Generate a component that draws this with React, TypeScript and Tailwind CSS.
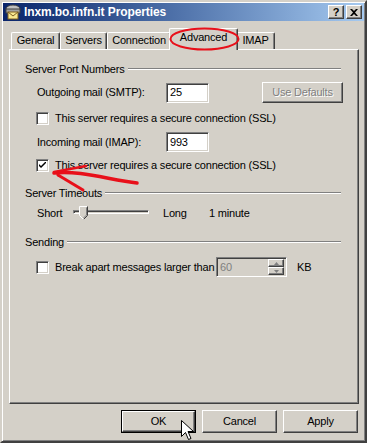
import type { ReactNode } from 'react'

const raised =
  'border border-t-white border-l-white border-r-[#404040] border-b-[#404040] shadow-[inset_-1px_-1px_0_#808080]'
const sunken =
  'border border-t-[#808080] border-l-[#808080] border-r-white border-b-white shadow-[inset_1px_1px_0_#404040,inset_-1px_-1px_0_#d4d0c8]'

function GroupHeader({ title }: { title: string }) {
  return (
    <div className="flex items-center h-[14px]">
      <span>{title}</span>
      <div className="flex-1 ml-[3px] h-[2px] border-t border-t-[#808080] border-b border-b-white" />
    </div>
  )
}

function CheckBox({ checked = false }: { checked?: boolean }) {
  return (
    <div className={`w-[13px] h-[13px] bg-white flex items-center justify-center ${sunken}`}>
      {checked && (
        <svg width="7" height="7" viewBox="0 0 7 7">
          <path d="M0 2 L0 4 L2 6 L7 1 L7 -1 L2 4 Z" fill="#000" />
        </svg>
      )}
    </div>
  )
}

function Button({ children, isDefault = false }: { children: ReactNode; isDefault?: boolean }) {
  if (isDefault) {
    return (
      <div className="w-[75px] h-[23px] border border-black">
        <div className={`w-full h-full flex items-center justify-center ${raised}`}>{children}</div>
      </div>
    )
  }
  return (
    <div className={`w-[75px] h-[23px] flex items-center justify-center ${raised}`}>{children}</div>
  )
}

function Tab({ label, width, selected = false }: { label: string; width: number; selected?: boolean }) {
  const base = 'flex items-start justify-center rounded-t-[2px] border-t border-l border-t-white border-l-white border-r border-r-[#404040] shadow-[inset_-1px_0_0_#808080] bg-[#d4d0c8]'
  if (selected) {
    return (
      <div
        className={`${base} relative z-10 h-[22px] mb-[-1px] -mx-[2px] pt-[2px]`}
        style={{ width: width + 4 }}
      >
        {label}
      </div>
    )
  }
  return (
    <div className={`${base} h-[17px] pt-[1px]`} style={{ width }}>
      {label}
    </div>
  )
}

export default function App() {
  return (
    <div
      className="relative w-[367px] h-[443px] bg-[#d4d0c8] text-[11px] leading-[13px] tracking-[-0.2px] text-black border-2 border-t-[#d4d0c8] border-l-[#d4d0c8] border-r-[#404040] border-b-[#404040] shadow-[inset_1px_1px_0_#fff,inset_-1px_-1px_0_#808080] p-[1px] flex flex-col"
      style={{ fontFamily: '"Liberation Sans", Arial, sans-serif' }}
    >
      {/* title bar */}
      <div className="h-[18px] flex items-center bg-gradient-to-r from-[#0a246a] to-[#a6caf0] pl-[2px] pr-[2px]">
        <svg width="16" height="16" viewBox="0 0 16 16">
          <ellipse cx="8" cy="5" rx="7" ry="4" fill="#c0c0c0" stroke="#404040" />
          <rect x="1" y="5" width="14" height="4" fill="#a0a0a0" stroke="#404040" />
          <rect x="3" y="8" width="10" height="7" fill="#f8e890" stroke="#806020" />
          <path d="M3 8 L8 12 L13 8" fill="none" stroke="#806020" />
        </svg>
        <span className="ml-[3px] text-white font-bold text-[12px] tracking-[-0.1px]">lnxm.bo.infn.it Properties</span>
        <div className={`ml-auto w-[16px] h-[14px] bg-[#d4d0c8] flex items-center justify-center font-bold text-[11px] ${raised}`}>?</div>
        <div className={`ml-[2px] w-[16px] h-[14px] bg-[#d4d0c8] flex items-center justify-center ${raised}`}>
          <svg width="8" height="7" viewBox="0 0 8 7">
            <path d="M0 0 L2 0 L4 2 L6 0 L8 0 L5 3.5 L8 7 L6 7 L4 5 L2 7 L0 7 L3 3.5 Z" fill="#000" />
          </svg>
        </div>
      </div>

      {/* tabs */}
      <div className="mt-[7px] ml-[8px] h-[21px] flex items-end">
        <Tab label="General" width={49} />
        <Tab label="Servers" width={47} />
        <Tab label="Connection" width={64} />
        <Tab label="Advanced" width={65} selected />
        <Tab label="IMAP" width={39} />
      </div>

      {/* panel */}
      <div className="ml-[6px] w-[350px] h-[355px] border border-t-white border-l-white border-r-[#404040] border-b-[#404040] shadow-[inset_-1px_-1px_0_#808080] pl-[15px] pr-[17px] flex flex-col">
        <div className="mt-[12px]">
          <GroupHeader title="Server Port Numbers" />
        </div>
        <div className="mt-[6px] h-[21px] flex items-center pl-[12px]">
          <span className="w-[129px]">Outgoing mail (SMTP):</span>
          <div className={`w-[43px] h-[20px] bg-white pl-[3px] flex items-center ${sunken}`}>25</div>
          <div className={`ml-auto -mr-[2px] w-[81px] h-[21px] flex items-center justify-center text-[#808080] [text-shadow:1px_1px_0_#fff] ${raised}`}>
            Use Defaults
          </div>
        </div>
        <div className="mt-[8px] h-[14px] flex items-center pl-[11px]">
          <CheckBox />
          <span className="ml-[6px]">This server requires a secure connection (SSL)</span>
        </div>
        <div className="mt-[7px] h-[20px] flex items-center pl-[12px]">
          <span className="w-[129px]">Incoming mail (IMAP):</span>
          <div className={`w-[43px] h-[20px] bg-white pl-[3px] flex items-center ${sunken}`}>993</div>
        </div>
        <div className="mt-[6px] h-[14px] flex items-center pl-[11px]">
          <CheckBox checked />
          <span className="ml-[6px]">This server requires a secure connection (SSL)</span>
        </div>

        <div className="mt-[14px]">
          <GroupHeader title="Server Timeouts" />
        </div>
        <div className="mt-[5px] h-[16px] flex items-center pl-[12px]">
          <span className="w-[36px]">Short</span>
          <div className="relative w-[80px] h-[16px]">
            <div className="absolute left-0 top-[5px] w-[76px] h-[4px] border-t border-l border-t-[#808080] border-l-[#808080] border-b border-r border-b-white border-r-white shadow-[inset_1px_1px_0_#404040]" />
            <svg className="absolute left-[6px] top-[1px]" width="9" height="14" viewBox="0 0 9 14">
              <path d="M0.5 0.5 H8.5 V9.5 L4.5 13.5 L0.5 9.5 Z" fill="#d4d0c8" />
              <path d="M0.5 9.5 V0.5 H8" fill="none" stroke="#fff" />
              <path d="M8.5 0.5 V9.5 L4.5 13.5" fill="none" stroke="#404040" />
              <path d="M7.5 1.5 V9 L4.5 12" fill="none" stroke="#808080" />
              <path d="M0.5 9.5 L4.5 13.5" fill="none" stroke="#fff" />
            </svg>
          </div>
          <span className="ml-[10px] w-[46px]">Long</span>
          <span>1 minute</span>
        </div>

        <div className="mt-[14px]">
          <GroupHeader title="Sending" />
        </div>
        <div className="mt-[8px] h-[20px] flex items-center pl-[11px]">
          <CheckBox />
          <span className="ml-[6px] w-[161px] whitespace-nowrap">Break apart messages larger than</span>
          <div className={`w-[71px] h-[20px] bg-[#d4d0c8] flex items-center pl-[3px] text-[#808080] ${sunken}`}>
            <span className="flex-1">60</span>
            <div className="w-[16px] h-[16px] mr-[2px] flex flex-col">
              <div className={`h-[8px] flex items-center justify-center ${raised}`}>
                <svg width="5" height="3" viewBox="0 0 5 3"><path d="M2.5 0 L5 3 L0 3 Z" fill="#808080" /></svg>
              </div>
              <div className={`h-[8px] flex items-center justify-center ${raised}`}>
                <svg width="5" height="3" viewBox="0 0 5 3"><path d="M0 0 L5 0 L2.5 3 Z" fill="#808080" /></svg>
              </div>
            </div>
          </div>
          <span className="ml-[10px]">KB</span>
        </div>
      </div>

      {/* buttons */}
      <div className="mt-[6px] flex justify-end gap-[6px] pr-[6px]">
        <Button isDefault>OK</Button>
        <Button>Cancel</Button>
        <Button>Apply</Button>
      </div>

      {/* red annotations */}
      <svg className="absolute z-20 -left-[2px] -top-[2px] pointer-events-none" width="367" height="443" viewBox="0 0 367 443">
        <ellipse cx="204.5" cy="39" rx="34" ry="10.5" fill="none" stroke="#e8101a" strokeWidth="2" />
        <path d="M54 173 C80 170 110 180 137 183" fill="none" stroke="#e8101a" strokeWidth="3.5" strokeLinecap="round" />
        <path d="M54 172 L86 166" fill="none" stroke="#e8101a" strokeWidth="2.5" strokeLinecap="round" />
        <path d="M58 175 L83 190" fill="none" stroke="#e8101a" strokeWidth="3" strokeLinecap="round" />
        {/* mouse cursor */}
        <path
          d="M181.5 420.5 L181.5 436.5 L185.5 432.5 L188.5 439.5 L191 438.5 L188 431.5 L193.5 431.5 Z"
          fill="#fff"
          stroke="#000"
        />
      </svg>
    </div>
  )
}
